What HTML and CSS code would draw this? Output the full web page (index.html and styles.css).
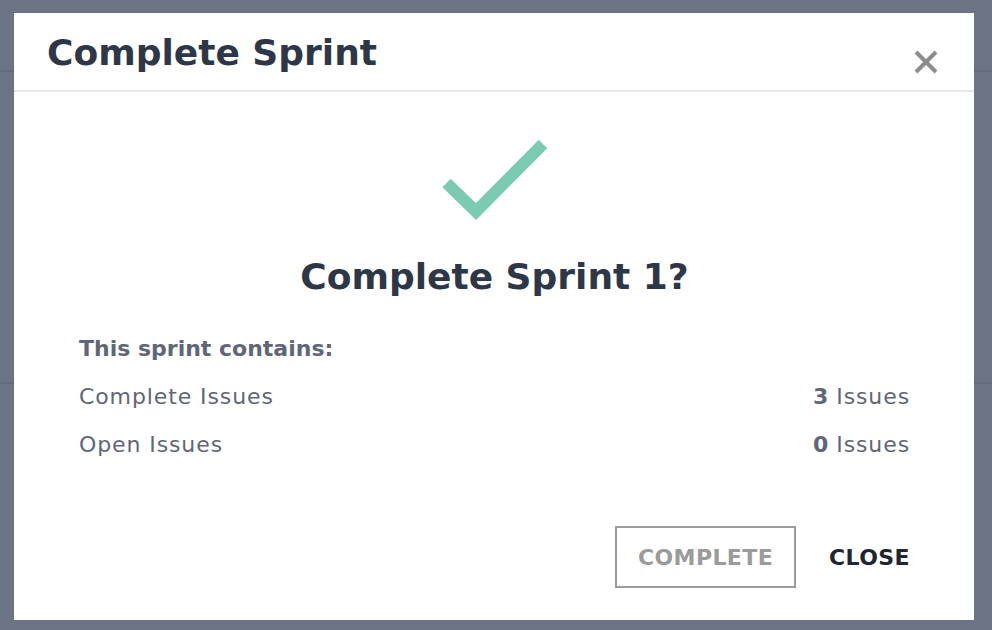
FILE: index.html
```html
<!DOCTYPE html>
<html lang="en">
<head>
<meta charset="utf-8">
<title>Complete Sprint</title>
<link rel="stylesheet" href="styles.css">
</head>
<body>
<div class="backdrop">
  <div class="bg-line bg-line-top"></div>
  <div class="bg-line bg-line-mid"></div>
  <div class="modal">
    <div class="modal-header">
      <h1 class="modal-title">Complete Sprint</h1>
      <button class="close-x" aria-label="Close">
        <svg width="24" height="24" viewBox="0 0 24 24"><path d="M2 2 L22 22 M22 2 L2 22" stroke="#8c8c8c" stroke-width="4" fill="none"/></svg>
      </button>
    </div>
    <div class="modal-body">
      <div class="check">
        <svg width="116" height="90" viewBox="0 0 116 90"><polyline points="9.5,47 39,75.5 106,8" fill="none" stroke="#7bcbb3" stroke-width="12" stroke-linejoin="miter"/></svg>
      </div>
      <h2 class="confirm-title">Complete Sprint 1?</h2>
      <div class="summary">
        <div class="summary-head">This sprint contains:</div>
        <div class="summary-row"><span>Complete Issues</span><span><b>3</b> Issues</span></div>
        <div class="summary-row"><span>Open Issues</span><span><b>0</b> Issues</span></div>
      </div>
      <div class="actions">
        <button class="btn btn-outline">COMPLETE</button>
        <button class="btn btn-text">CLOSE</button>
      </div>
    </div>
  </div>
</div>
</body>
</html>
```

FILE: styles.css
```css
html, body {
  margin: 0;
  padding: 0;
}
body {
  width: 992px;
  height: 630px;
  overflow: hidden;
  background: #6b7384;
  font-family: "DejaVu Sans", "Open Sans", sans-serif;
}
.backdrop {
  position: relative;
  width: 992px;
  height: 630px;
  padding: 13px 18px 10px 14px;
  box-sizing: border-box;
}
.bg-line {
  position: absolute;
  left: 0;
  right: 0;
  height: 2px;
  background: #646b7b;
}
.bg-line-top { top: 70px; }
.bg-line-mid { top: 382px; }
.modal {
  position: relative;
  background: #ffffff;
  height: 607px;
  display: flex;
  flex-direction: column;
}
.modal-header {
  height: 77px;
  border-bottom: 2px solid #e8e8e8;
  display: flex;
  align-items: flex-start;
  justify-content: space-between;
  padding: 0 36px 0 33px;
}
.modal-title {
  margin: 17px 0 0 0;
  font-size: 36px;
  font-weight: 700;
  color: #2d3748;
  line-height: 46px;
}
.close-x {
  margin-top: 37px;
  padding: 0;
  border: 0;
  background: none;
  width: 24px;
  height: 24px;
  display: flex;
}
.modal-body {
  flex: 1;
  display: flex;
  flex-direction: column;
  padding: 0 64px 0 65px;
}
.check {
  display: flex;
  justify-content: center;
  margin-top: 44px;
  height: 90px;
}
.confirm-title {
  margin: 28px 0 0 0;
  text-align: center;
  font-size: 36px;
  font-weight: 700;
  color: #2d3748;
  line-height: 46px;
}
.summary {
  margin-top: 25px;
  color: #5f6678;
  font-size: 22px;
  letter-spacing: 0.9px;
}
.summary-head {
  font-weight: 700;
  letter-spacing: 0;
  line-height: 48px;
}
.summary-row {
  display: flex;
  justify-content: space-between;
  line-height: 48px;
}
.summary-row b {
  font-weight: 700;
  letter-spacing: 0;
}
.actions {
  margin-top: 57px;
  display: flex;
  justify-content: flex-end;
  align-items: center;
  gap: 33px;
}
.btn {
  font-family: inherit;
  font-size: 22px;
  font-weight: 700;
  background: none;
  cursor: pointer;
  letter-spacing: 0.4px;
}
.btn-outline {
  width: 181px;
  height: 62px;
  border: 2px solid #9b9b9b;
  color: #9b9b9b;
}
.btn-text {
  border: 0;
  padding: 0;
  color: #1f2533;
}
```
